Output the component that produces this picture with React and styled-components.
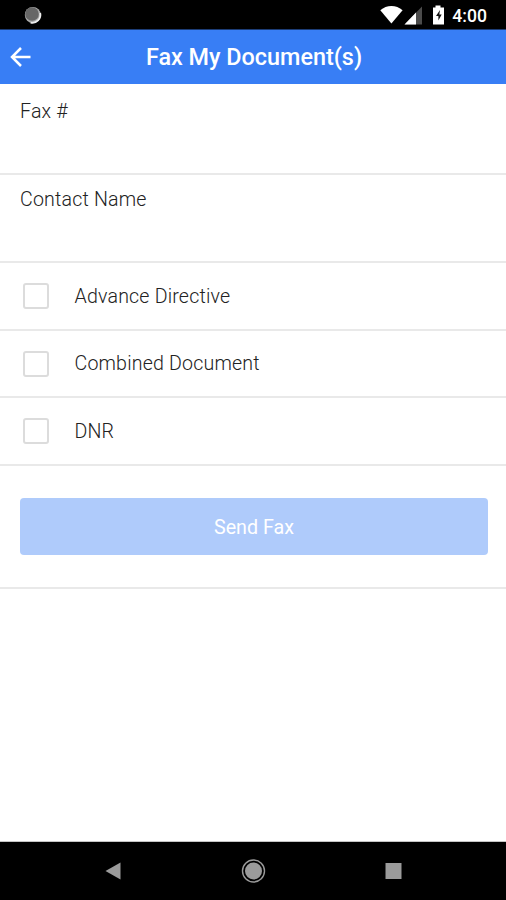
import React, { useState } from 'react';
import styled, { createGlobalStyle } from 'styled-components';

const GlobalStyle = createGlobalStyle`
  * {
    box-sizing: border-box;
  }
  body {
    margin: 0;
    background-color: #fff;
    font-family: Roboto, "Liberation Sans", sans-serif;
  }
`

const Screen = styled.div`
  display: flex;
  flex-direction: column;
  width: 506px;
  height: 900px;
  overflow: hidden;
  background-color: #fff;
`

const StatusBar = styled.div`
  display: flex;
  align-items: center;
  height: 30px;
  padding: 0 19px 0 23px;
  background-color: #000;
  border-bottom: 1px solid #1c3d78;
`

const StatusIcons = styled.div`
  display: flex;
  align-items: center;
  margin-left: auto;
`

const Clock = styled.span`
  margin-left: 4px;
  padding-top: 2px;
  color: #fff;
  font-size: 17.6px;
  font-weight: 500;
  line-height: 20px;
`

const Header = styled.header`
  display: grid;
  grid-template-columns: 40px 1fr 38px;
  align-items: center;
  height: 54px;
  background-color: #387ef5;
`

const BackButton = styled.button`
  display: flex;
  padding: 0 0 0 9px;
  border: 0;
  background: none;
  cursor: pointer;
`

const Title = styled.h1`
  margin: 0;
  color: #fff;
  font-size: 23.4px;
  font-weight: 500;
  line-height: 28px;
  text-align: center;
`

const Field = styled.label`
  display: flex;
  flex-direction: column;
  height: 88px;
  padding: 13px 20px 0;
  border-bottom: 2px solid #e9e9e9;

  &:first-of-type {
    height: 91px;
    padding-top: 16px;
  }
`

const Label = styled.span`
  color: #222;
  font-size: 19.6px;
  font-weight: 300;
  line-height: 24px;
  letter-spacing: 0.18px;
`

const Input = styled.input`
  width: 100%;
  height: 36px;
  padding: 0;
  border: 0;
  outline: 0;
  background: none;
  font: inherit;
  font-size: 20px;
`

const CheckRow = styled.label`
  display: flex;
  align-items: center;
  gap: 25.5px;
  height: ${(props) => props.$height}px;
  padding-left: 23px;
  border-bottom: 2px solid #e9e9e9;
  cursor: pointer;

  ${Label} {
    padding-top: 1px;
  }
`

const Checkbox = styled.input`
  appearance: none;
  width: 26px;
  height: 26px;
  margin: 0;
  border: 2px solid #dcdcdc;
  border-radius: 3px;
  background-color: ${(props) => (props.checked ? '#387ef5' : '#fff')};
`

const Actions = styled.div`
  height: 123px;
  padding: 32px 18px 0 20px;
  border-bottom: 2px solid #e9e9e9;
`

const SendButton = styled.button`
  display: block;
  width: 100%;
  height: 57px;
  padding: 2px 0 0;
  border: 0;
  border-radius: 4px;
  background-color: #afcbfb;
  color: #fff;
  font-family: inherit;
  font-size: 19.7px;
`

const NavBar = styled.nav`
  display: flex;
  align-items: center;
  height: 59px;
  margin-top: auto;
  background-color: #000;
  border-top: 1px solid #c4c4c4;
`

const NavIcon = styled.svg`
  display: block;
  width: 26px;
  height: 26px;
  margin-left: ${(props) => props.$left}px;
`

const documents = [
  { id: 'ad', name: 'Advance Directive', height: 68 },
  { id: 'combined', name: 'Combined Document', height: 67 },
  { id: 'dnr', name: 'DNR', height: 68 },
];

function App(){
  const [selected, setSelected] = useState([]);

  const toggle = (id) => {
    setSelected(selected.includes(id) ? selected.filter((item) => item !== id) : [...selected, id])
  }

  return (
    <Screen>
      <GlobalStyle />
      <StatusBar>
        <svg width="20" height="20" viewBox="0 0 20 20">
          <circle cx="9.8" cy="10" r="8" fill="#aaa" />
          <path d="M17.2 8a8 8 0 0 1-9.6 9.6" fill="none" stroke="#eee" strokeWidth="1.8" />
          <circle cx="9" cy="9" r="6.8" fill="#666" />
        </svg>
        <StatusIcons>
          <svg width="68" height="22" viewBox="380 5 68 22">
            {/* wifi */}
            <path d="M380.3 11.2C386.6 5.5 396.3 5.5 402.6 11.2L391.4 24.5Z" fill="#fff" />
            {/* signal */}
            <path d="M422 7.5V25.5H404.5Z" fill="#4b4b4b" />
            <path d="M416 13.5V25.5H404.5Z" fill="#fff" />
            {/* battery */}
            <path d="M435.5 6.5h5v2h3.5v17H433V8.5h2.5Z" fill="#fff" />
            <path d="M440 11l-4 6h2.4v4.5l3.3-6h-2.4Z" fill="#111" />
          </svg>
          <Clock>4:00</Clock>
        </StatusIcons>
      </StatusBar>
      <Header>
        <BackButton aria-label="Back">
          <svg width="24" height="24" viewBox="0 0 24 24" fill="none" stroke="#fff" strokeWidth="2.5">
            <path d="M21.5 12H3M12 3L3 12l9 9" />
          </svg>
        </BackButton>
        <Title>Fax My Document(s)</Title>
      </Header>
      <Field>
        <Label>Fax #</Label>
        <Input type="tel" />
      </Field>
      <Field>
        <Label>Contact Name</Label>
        <Input type="text" />
      </Field>
      {documents.map((item) => (
        <CheckRow key={item.id} $height={item.height}>
          <Checkbox
            type="checkbox"
            checked={selected.includes(item.id)}
            onChange={() => toggle(item.id)}
          />
          <Label>{item.name}</Label>
        </CheckRow>
      ))}
      <Actions>
        <SendButton disabled>Send Fax</SendButton>
      </Actions>
      <NavBar>
        <NavIcon $left={100} viewBox="0 0 26 26">
          <path d="M5.5 13L20.5 4.5v17Z" fill="#9b9b9b" />
        </NavIcon>
        <NavIcon $left={114} viewBox="0 0 26 26">
          <circle cx="13.5" cy="13" r="11" fill="none" stroke="#9b9b9b" strokeWidth="1.4" />
          <circle cx="13.5" cy="13" r="8.5" fill="#9b9b9b" />
        </NavIcon>
        <NavIcon $left={114} viewBox="0 0 26 26">
          <path d="M5.5 5h16v16h-16Z" fill="#9b9b9b" />
        </NavIcon>
      </NavBar>
    </Screen>
  )
}

export default App;
